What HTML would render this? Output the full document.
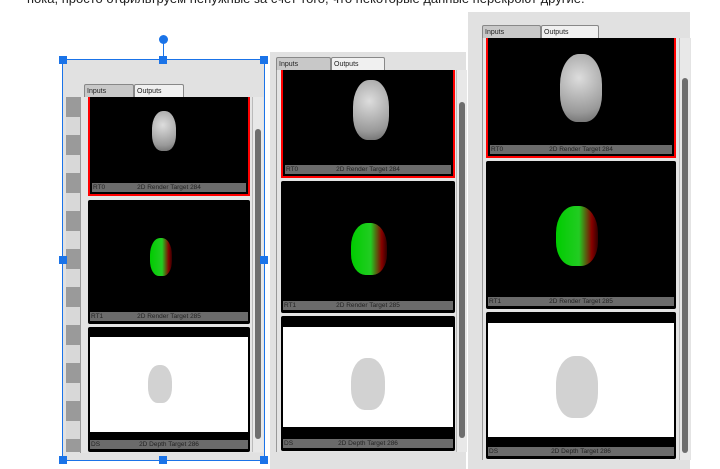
<!DOCTYPE html><html><head><style>
body{margin:0;width:720px;height:469px;background:#fff;position:relative;overflow:hidden;font-family:"Liberation Sans",sans-serif}
.a{position:absolute}
.panel{position:absolute;background:#e1e1e1}
.tab{position:absolute;height:13px;border:1px solid #888;border-bottom:none;font-size:7px;line-height:13px;padding-left:2px;box-sizing:border-box;color:#222;border-radius:2px 2px 0 0}
.card{position:absolute;background:#000;border-radius:2px;box-sizing:border-box}
.red{border:2px solid #f00;border-top:none;border-radius:0}
.lbl{position:absolute;left:2px;right:2px;height:9px;background:#6b6b6b;font-size:6.5px;line-height:9px;color:#222;text-align:center}
.lbl span{position:absolute;left:1px}
.sb{position:absolute;background:#e8e8e8;border-left:1px solid #bbb}
.th{position:absolute;left:2px;right:2px;background:#6e6e6e;border-radius:3px}
.head{position:absolute;border-radius:45% 45% 40% 40%;background:radial-gradient(circle at 45% 35%,#ddd,#999 70%,#666)}
.green{position:absolute;border-radius:45% 45% 40% 40%;background:linear-gradient(90deg,#0c0 0%,#2c2 55%,#800 85%,#300)}
.depth{position:absolute;border-radius:45% 45% 40% 40%;background:#d2d2d2}
.h{position:absolute;width:8px;height:8px;background:#1a73e8}
</style></head><body>
<div class="a" style="left:27px;top:-9px;font-size:13px;color:#222">пока, просто отфильтруем ненужные за счет того, что некоторые данные перекроют другие.</div>

<!-- Panel A -->
<div class="panel" style="left:63px;top:60px;width:201px;height:400px"></div>
<div class="a" style="left:66px;top:97px;width:14px;height:355px;background:repeating-linear-gradient(#9a9a9a 0 20px,#d8d8d8 20px 38px)"></div>
<div class="a" style="left:80px;top:97px;width:184px;height:356px;background:#e4e4e4;border-left:1px solid #999"></div>
<div class="tab" style="left:84px;top:84px;width:50px;background:#c8c8c8">Inputs</div>
<div class="tab" style="left:134px;top:84px;width:50px;background:#f0f0f0">Outputs</div>
<div class="card red" style="left:88px;top:97px;width:162px;height:99px"><div class="lbl" style="bottom:2px"><span>RT0</span>2D Render Target 284</div><div class="head" style="left:62px;top:14px;width:24px;height:40px"></div></div>
<div class="card" style="left:88px;top:200px;width:162px;height:124px"><div class="lbl" style="bottom:3px"><span>RT1</span>2D Render Target 285</div><div class="green" style="left:62px;top:38px;width:22px;height:38px"></div></div>
<div class="card" style="left:88px;top:327px;width:162px;height:125px"><div class="a" style="left:2px;top:10px;right:2px;height:95px;background:#fff"></div><div class="lbl" style="bottom:3px"><span>DS</span>2D Depth Target 286</div><div class="depth" style="left:60px;top:38px;width:24px;height:38px"></div></div>
<div class="sb" style="left:252px;top:97px;width:10px;height:355px"><div class="th" style="top:32px;height:310px"></div></div>

<!-- Panel B -->
<div class="panel" style="left:270px;top:52px;width:196px;height:417px"></div>
<div class="a" style="left:276px;top:70px;width:190px;height:382px;background:#e4e4e4;border-left:1px solid #999"></div>
<div class="tab" style="left:276px;top:57px;width:55px;background:#c8c8c8">Inputs</div>
<div class="tab" style="left:331px;top:57px;width:54px;background:#f0f0f0">Outputs</div>
<div class="card red" style="left:281px;top:70px;width:174px;height:108px"><div class="lbl" style="bottom:2px"><span>RT0</span>2D Render Target 284</div><div class="head" style="left:70px;top:10px;width:36px;height:60px"></div></div>
<div class="card" style="left:281px;top:181px;width:174px;height:132px"><div class="lbl" style="bottom:3px"><span>RT1</span>2D Render Target 285</div><div class="green" style="left:70px;top:42px;width:36px;height:52px"></div></div>
<div class="card" style="left:281px;top:316px;width:174px;height:135px"><div class="a" style="left:2px;top:11px;right:2px;height:100px;background:#fff"></div><div class="lbl" style="bottom:3px"><span>DS</span>2D Depth Target 286</div><div class="depth" style="left:70px;top:42px;width:34px;height:52px"></div></div>
<div class="sb" style="left:456px;top:70px;width:10px;height:382px"><div class="th" style="top:32px;height:336px"></div></div>

<!-- Panel C -->
<div class="panel" style="left:468px;top:12px;width:222px;height:457px"></div>
<div class="a" style="left:482px;top:38px;width:208px;height:422px;background:#e4e4e4;border-left:1px solid #999"></div>
<div class="tab" style="left:482px;top:25px;width:59px;background:#c8c8c8">Inputs</div>
<div class="tab" style="left:541px;top:25px;width:58px;background:#f0f0f0">Outputs</div>
<div class="card red" style="left:486px;top:38px;width:190px;height:120px"><div class="lbl" style="bottom:2px"><span>RT0</span>2D Render Target 284</div><div class="head" style="left:72px;top:16px;width:42px;height:68px"></div></div>
<div class="card" style="left:486px;top:161px;width:190px;height:148px"><div class="lbl" style="bottom:3px"><span>RT1</span>2D Render Target 285</div><div class="green" style="left:70px;top:45px;width:42px;height:60px"></div></div>
<div class="card" style="left:486px;top:312px;width:190px;height:147px"><div class="a" style="left:2px;top:11px;right:2px;height:114px;background:#fff"></div><div class="lbl" style="bottom:3px"><span>DS</span>2D Depth Target 286</div><div class="depth" style="left:70px;top:44px;width:42px;height:62px"></div></div>
<div class="sb" style="left:679px;top:38px;width:10px;height:422px"><div class="th" style="top:40px;height:375px"></div></div>

<!-- selection -->
<div class="a" style="left:62px;top:59px;width:201px;height:400px;border:1px solid #1a73e8"></div>
<div class="a" style="left:163px;top:40px;width:1px;height:20px;background:#1a73e8"></div>
<div class="a" style="left:159px;top:35px;width:9px;height:9px;border-radius:50%;background:#1a73e8"></div>
<div class="h" style="left:59px;top:56px"></div><div class="h" style="left:159px;top:56px"></div><div class="h" style="left:260px;top:56px"></div>
<div class="h" style="left:59px;top:256px"></div><div class="h" style="left:260px;top:256px"></div>
<div class="h" style="left:59px;top:456px"></div><div class="h" style="left:159px;top:456px"></div><div class="h" style="left:260px;top:456px"></div>
</body></html>
